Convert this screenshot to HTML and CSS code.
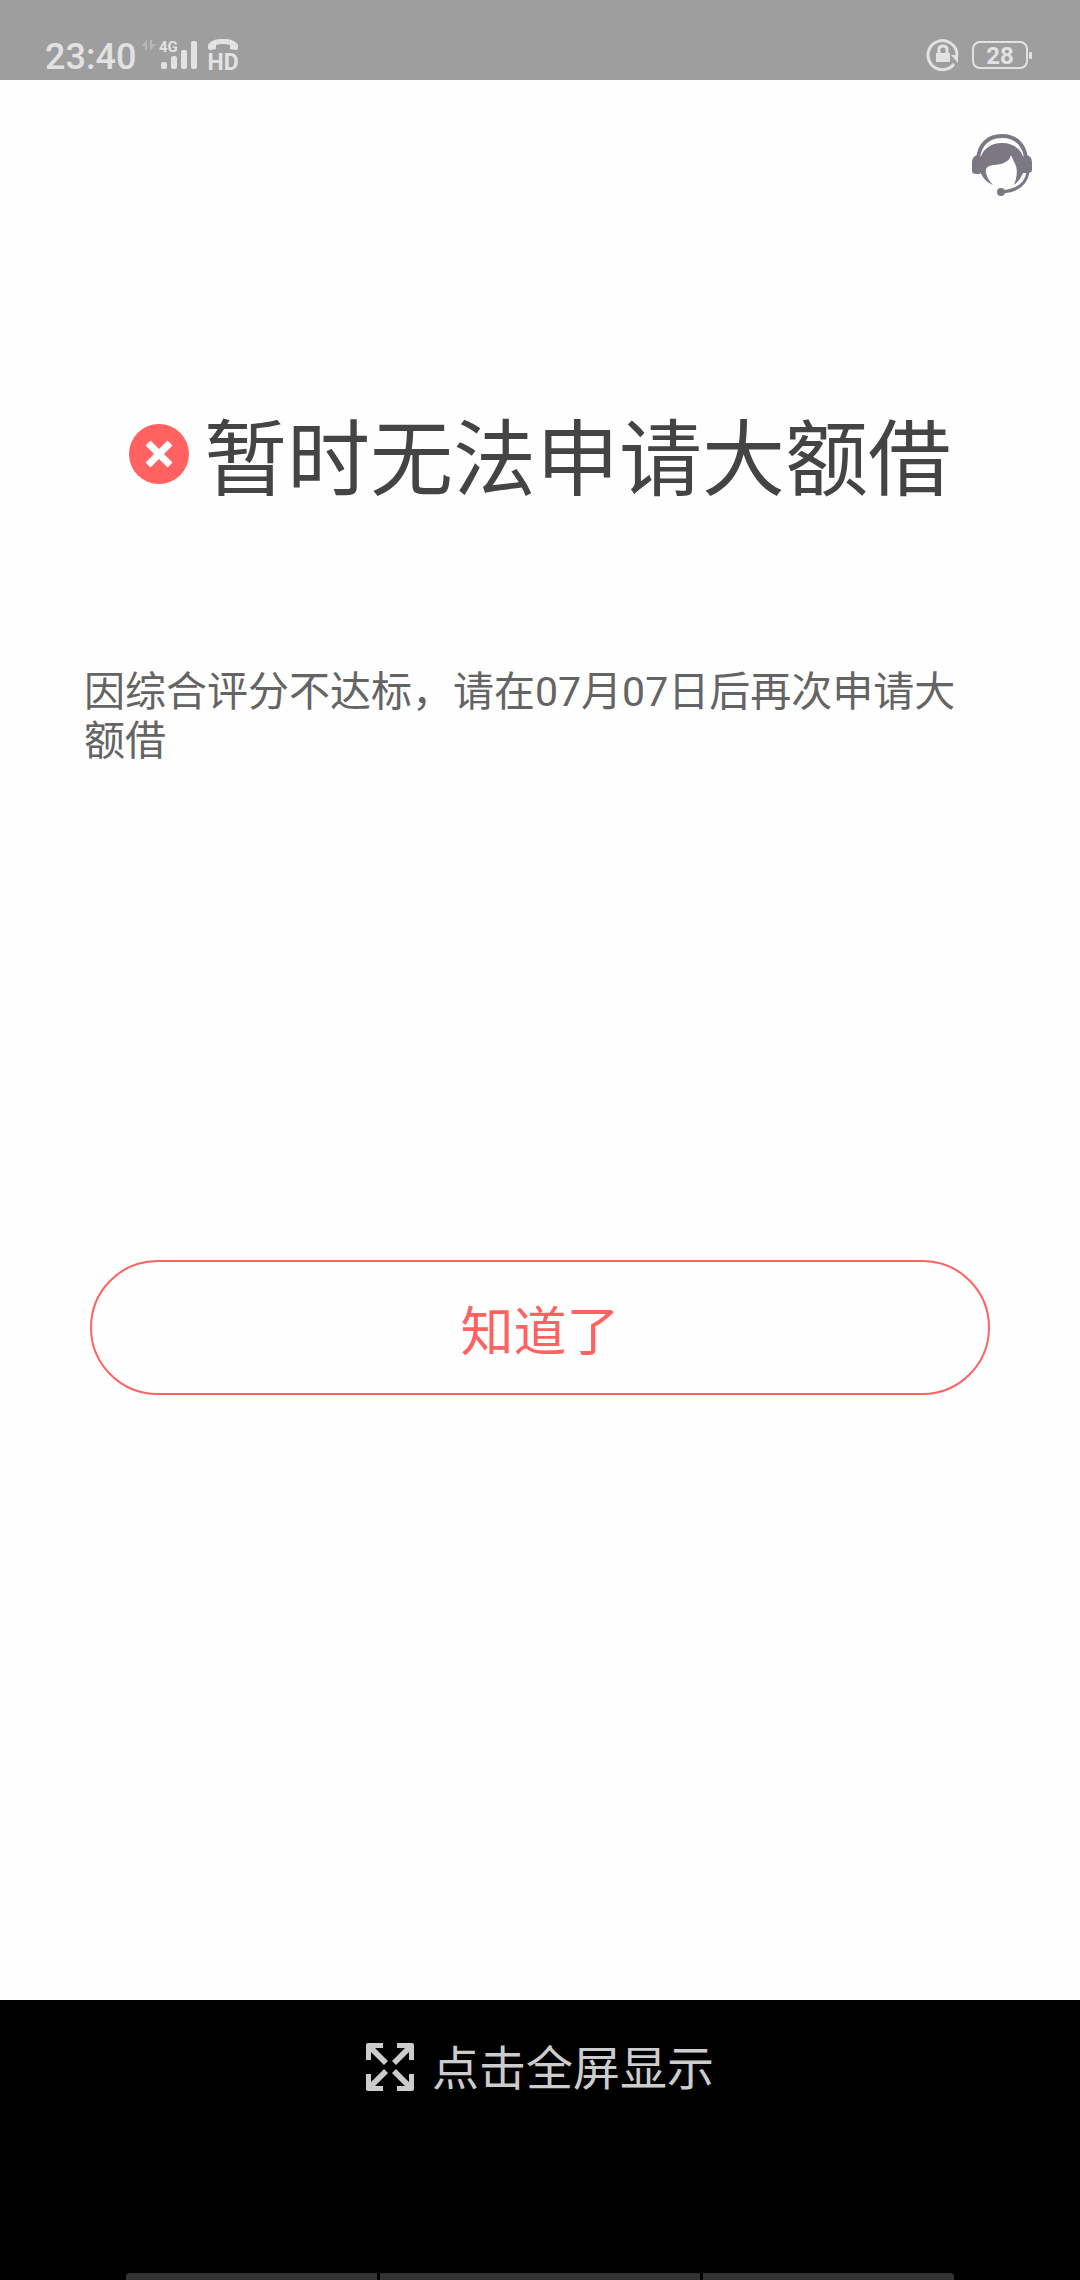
FILE: index.html
```html
<!DOCTYPE html>
<html lang="zh-CN">
<head>
<meta charset="utf-8">
<meta name="viewport" content="width=device-width, initial-scale=1">
<title>大额借</title>
<link rel="stylesheet" href="styles.css">
</head>
<body>
<header class="status">
  <div class="status-left">
    <span class="clock">23:40</span>
    <svg class="signal" width="56" height="32" viewBox="0 0 56 32" aria-hidden="true">
      <path class="faint" d="M0 7L5 0V11H3V7ZM8 1H10V5H14L8 12Z"/>
      <rect x="19" y="23" width="6" height="7" rx="2"/>
      <rect x="29" y="17" width="6" height="13" rx="2"/>
      <rect x="39" y="11" width="6" height="19" rx="2"/>
      <rect x="49" y="2" width="6" height="28" rx="2"/>
      <text x="17" y="13" class="network">4G</text>
    </svg>
    <svg class="hd" width="32" height="36" viewBox="0 0 32 36" aria-hidden="true">
      <path d="M1 11V8C4 3 9 2 16 2S28 3 31 8V11Q31 13 28 13L23 12V8Q16 6 9 8V12L4 13Q1 13 1 11Z"/>
      <text x="16" y="33" text-anchor="middle" class="hd-text">HD</text>
    </svg>
  </div>
  <div class="status-right">
    <svg width="34" height="34" viewBox="0 0 34 34" aria-hidden="true">
      <path class="ring" d="M31 17A14.5 14.5 0 1 0 28 26"/>
      <path d="M25 17H32V25Z"/>
      <rect x="10" y="15" width="14" height="9"/>
      <path class="shackle" d="M13 16V11Q13 8 17 8T21 11V16"/>
    </svg>
    <div class="battery"><span class="level">28</span><i class="cap"></i></div>
  </div>
</header>

<main class="page">
  <div class="toolbar">
    <button class="service" type="button" aria-label="客服">
      <svg width="60" height="64" viewBox="0 0 60 64" aria-hidden="true">
        <path class="band" d="M6 25C7 10 17 2 30 2S53 10 54 25"/>
        <path d="M0 28Q0 22 6 21L9 23V38L8 40H4Q0 40 0 37ZM60 28Q60 22 54 21L51 23V39H55Q60 39 60 36Z"/>
        <path d="M8 26C10 15 19 9 30 9S50 15 52 26V37C49 44 46 48 42 51C44 46 46 39 44 32C42 27 41 26 39 21C37 28 31 30 23 31C16 31 13 34 14 39C15 44 18 48 21 51C14 48 10 43 8 37Z"/>
        <path class="mic" d="M56 38C54 51 44 57 29 58"/>
        <circle cx="29" cy="58" r="4"/>
      </svg>
    </button>
  </div>

  <div class="heading">
    <svg class="error" width="60" height="60" viewBox="0 0 60 60" aria-hidden="true">
      <circle cx="30" cy="30" r="30"/>
      <path d="M19 19L41 41M41 19L19 41"/>
    </svg>
    <h1>暂时无法申请大额借</h1>
  </div>

  <p class="reason">因综合评分不达标，请在07月07日后再次申请大额借</p>

  <button class="confirm" type="button">知道了</button>
</main>

<footer class="footer">
  <button class="fullscreen" type="button">
    <svg width="48" height="48" viewBox="0 0 48 48" aria-hidden="true">
      <path id="arrow" d="M2 0H17V5H9L22 18L18 22L5 9V17H0V2Q0 0 2 0Z"/>
      <use href="#arrow" transform="rotate(90 24 24)"/>
      <use href="#arrow" transform="rotate(180 24 24)"/>
      <use href="#arrow" transform="rotate(270 24 24)"/>
    </svg>
    <span class="fullscreen-label">点击全屏显示</span>
  </button>
  <div class="nav"><i></i><i class="wide"></i><i></i></div>
</footer>
</body>
</html>
```
FILE: styles.css
```css
* {
  box-sizing: border-box;
}

body {
  margin: 0;
  min-height: 100vh;
  display: flex;
  flex-direction: column;
  background: #fefefe;
  font-family: Roboto, "Noto Sans CJK SC", sans-serif;
}

button {
  padding: 0;
  border: 0;
  background: none;
  font-family: inherit;
}

svg {
  display: block;
  flex: none;
}

.status {
  display: flex;
  justify-content: space-between;
  height: 80px;
  padding: 32px 48px 0 45px;
  background: #9e9e9e;
  color: #e2e2e2;
  fill: #e2e2e2;
}

.status-left,
.status-right {
  display: flex;
  align-items: center;
  height: 46px;
}

.clock {
  padding-top: 4px;
  font-size: 36px;
  line-height: 42px;
  font-weight: 500;
}

.signal {
  margin: 0 9px 0 6px;
}

.faint {
  fill: #b6b6b6;
}

.network {
  font-size: 15px;
  font-weight: 700;
}

.hd-text {
  font-size: 23px;
  font-weight: 700;
}

.status-right {
  gap: 12px;
}

.ring {
  fill: none;
  stroke: #e2e2e2;
  stroke-width: 3;
}

.shackle {
  fill: none;
  stroke: #e2e2e2;
  stroke-width: 3;
}

.battery {
  display: flex;
  align-items: center;
  gap: 1px;
}

.level {
  width: 56px;
  height: 28px;
  border: 2px solid #e2e2e2;
  border-radius: 8px;
  font-size: 24px;
  line-height: 26px;
  font-weight: 700;
  text-align: center;
}

.cap {
  width: 3px;
  height: 7px;
  border-radius: 1px;
  background: #e2e2e2;
}

.page {
  flex: 1;
}

.toolbar {
  display: flex;
  justify-content: flex-end;
  padding: 54px 48px 0;
}

.service {
  fill: #7b7883;
}

.band,
.mic {
  fill: none;
  stroke: #7b7883;
  stroke-width: 4;
}

.mic {
  stroke-width: 3;
}

.heading {
  display: flex;
  justify-content: center;
  gap: 15px;
  margin-top: 203px;
}

.error {
  margin-top: 23px;
  fill: #ff6260;
}

.error path {
  stroke: #fff;
  stroke-width: 7;
}

h1 {
  margin: 0;
  font-size: 83px;
  line-height: 120px;
  font-weight: 400;
  color: #444;
}

.reason {
  margin: 147px 84px 0;
  font-size: 41px;
  line-height: 49px;
  color: #646464;
}

.confirm {
  display: block;
  width: calc(100% - 180px);
  height: 135px;
  margin: 494px 90px 0;
  border: 2px solid #ff6260;
  border-radius: 68px;
  font-size: 53px;
  color: #ff6260;
}

.footer {
  display: flex;
  flex-direction: column;
  justify-content: space-between;
  align-items: center;
  height: 280px;
  padding-top: 32px;
  background: #000;
}

.fullscreen {
  display: flex;
  align-items: center;
  gap: 18px;
  font-size: 47px;
  line-height: 66px;
  color: #ccc;
  fill: #ccc;
}

.fullscreen-label {
  padding-top: 4px;
}

.nav {
  display: flex;
  gap: 3px;
  width: calc(100% - 252px);
  height: 7px;
  border-radius: 4px 4px 0 0;
  overflow: hidden;
}

.nav i {
  flex: 251;
  background: #333;
}

.nav .wide {
  flex: 320;
}
```
